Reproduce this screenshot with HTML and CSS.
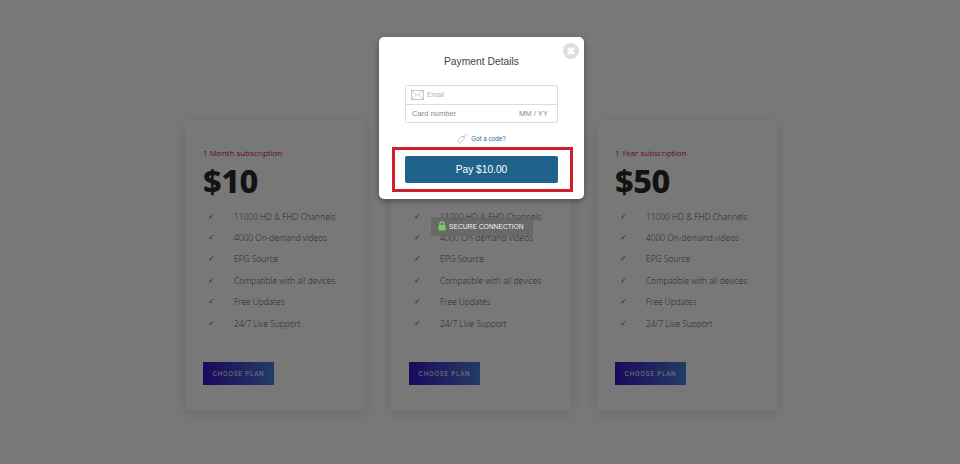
FILE: index.html
```html
<!DOCTYPE html>
<html>
 <head>
  <title>Payment Details</title><meta charset="utf-8">
  <link rel="stylesheet" href="styles.css">
 </head>
 <body>
  <div class="plans">
    <div class="plan">
      <div class="term">1 Month subscription</div>
      <div class="price">$10</div>
      <ul>
        <li>11000 HD &amp; FHD Channels</li>
        <li>4000 On-demand videos</li>
        <li>EPG Source</li>
        <li>Compatible with all devices</li>
        <li>Free Updates</li>
        <li>24/7 Live Support</li>
      </ul>
      <a class="choose" href="#">CHOOSE PLAN</a>
    </div>
    <div class="plan">
      <div class="term"></div>
      <div class="price"></div>
      <ul>
        <li>11000 HD &amp; FHD Channels</li>
        <li>4000 On-demand videos</li>
        <li>EPG Source</li>
        <li>Compatible with all devices</li>
        <li>Free Updates</li>
        <li>24/7 Live Support</li>
      </ul>
      <a class="choose" href="#">CHOOSE PLAN</a>
    </div>
    <div class="plan">
      <div class="term">1 Year subscription</div>
      <div class="price">$50</div>
      <ul>
        <li>11000 HD &amp; FHD Channels</li>
        <li>4000 On-demand videos</li>
        <li>EPG Source</li>
        <li>Compatible with all devices</li>
        <li>Free Updates</li>
        <li>24/7 Live Support</li>
      </ul>
      <a class="choose" href="#">CHOOSE PLAN</a>
    </div>
  </div>

  <div class="overlay"></div>

  <div class="secure">
    <svg class="lock" width="8" height="10" viewBox="0 0 8 10">
      <path d="M2 4.5V2.8a2 2 0 0 1 4 0v1.7" fill="none" stroke="#7fe06a" stroke-width="1.2"/>
      <rect x="0.5" y="4" width="7" height="5.5" rx="0.8" fill="#6fd45a"/>
    </svg>
    <span>SECURE CONNECTION</span>
  </div>

  <div class="modal">
    <a class="close" href="#">
      <svg width="16" height="16" viewBox="0 0 16 16">
        <circle cx="8" cy="8" r="8" fill="#dedede"/>
        <path d="M5 5l6 6M11 5l-6 6" stroke="#fff" stroke-width="2.6"/>
      </svg>
    </a>
    <h2>Payment Details</h2>
    <div class="fields">
      <div class="field">
        <svg class="mail" width="13" height="10" viewBox="0 0 13 10">
          <rect x="0.5" y="0.5" width="12" height="9" fill="none" stroke="#c4c4c4"/>
          <path d="M0.5 0.5l6 5 6-5M0.5 9.5l4.5-5M12.5 9.5l-4.5-5" fill="none" stroke="#c4c4c4" stroke-width="0.8"/>
        </svg>
        <span class="email">Email</span>
      </div>
      <div class="field card">
        <span>Card number</span>
        <span>MM / YY</span>
      </div>
    </div>
    <div class="code">
      <svg width="11" height="11" viewBox="0 0 11 11">
        <path d="M1 7l3.6-3.6h2.6v2.6L3.6 9.6a1 1 0 0 1-1.4 0L1 8.4A1 1 0 0 1 1 7zM6 4.4L10 .8" fill="none" stroke="#bdbdbd" stroke-width="0.9"/>
      </svg>
      <a href="#">Got a code?</a>
    </div>
    <div class="pay-box">
      <button class="pay">Pay $10.00</button>
    </div>
  </div>
 </body>
</html>
```
FILE: styles.css
```css
html, body {
  height: 100%;
}

body {
  margin: 0;
  background: #fff;
  overflow: hidden;
  font-family: "Open Sans", sans-serif;
}

.plans {
  display: flex;
  justify-content: center;
  gap: 26px;
  padding: 121px 0 0 2px;
}

.plan {
  width: 180px;
  height: 289px;
  box-sizing: border-box;
  padding: 26px 18px 0;
  background: #fff;
  box-shadow: 0 3px 14px rgba(0, 0, 0, 0.12);
}

.term {
  height: 11px;
  font-size: 8px;
  line-height: 11px;
  color: #d6154f;
}

.price {
  height: 42px;
  margin: 2px 0 0;
  font-family: "Noto Sans", sans-serif;
  font-size: 32.5px;
  line-height: 42px;
  font-weight: 800;
  letter-spacing: -0.5px;
  color: #2a2a2a;
}

.plan ul {
  list-style: none;
  margin: 3.7px 0 0;
  padding: 0;
}

.plan li {
  position: relative;
  height: 21.4px;
  padding-left: 31px;
  font-size: 8.4px;
  line-height: 21px;
  font-weight: 300;
  white-space: nowrap;
  color: #555;
}

.plan li::before {
  content: "\2713";
  position: absolute;
  left: 5px;
  font-family: "DejaVu Sans", sans-serif;
  font-size: 8px;
  font-weight: 400;
  color: #4a4ad0;
}

.choose {
  display: block;
  width: 71px;
  height: 23px;
  margin-top: 28.3px;
  background: linear-gradient(90deg, #3a13c4, #4a80d8);
  color: #fff;
  font-family: Inter, sans-serif;
  font-size: 6px;
  line-height: 23px;
  letter-spacing: 0.8px;
  text-align: center;
  text-decoration: none;
}

.overlay {
  position: absolute;
  top: 0;
  left: 0;
  right: 0;
  bottom: 0;
  background: rgba(0, 0, 0, 0.53);
}

.secure {
  position: absolute;
  left: 431px;
  top: 217px;
  width: 102px;
  height: 19px;
  display: flex;
  align-items: center;
  gap: 3px;
  padding: 0 0 1px 7px;
  box-sizing: border-box;
  border-radius: 2px;
  background: rgba(100, 100, 100, 0.75);
  color: #f2f2f2;
  font-family: "Liberation Sans", sans-serif;
  font-size: 6.7px;
  line-height: 17px;
}

.modal {
  position: absolute;
  left: 379px;
  top: 37px;
  width: 205px;
  height: 162px;
  box-sizing: border-box;
  padding: 18px 26px 0;
  border-radius: 5px;
  background: #fff;
  box-shadow: 0 2px 6px rgba(0, 0, 0, 0.35);
  font-family: "Liberation Sans", sans-serif;
}

.close {
  position: absolute;
  top: 6px;
  right: 5px;
  line-height: 0;
}

.modal h2 {
  margin: 0;
  font-size: 10.3px;
  line-height: 13px;
  font-weight: normal;
  text-align: center;
  color: #444;
}

.fields {
  margin-top: 17px;
  border: 1px solid #dcdcdc;
  border-radius: 2px;
}

.field {
  height: 17.5px;
  display: flex;
  align-items: center;
  padding: 0 9px 0 5px;
  font-size: 7.6px;
  color: #888;
}

.field.card {
  justify-content: space-between;
  height: 17px;
  border-top: 1px solid #dcdcdc;
  padding-left: 6px;
}

.mail {
  margin-right: 3px;
}

.email {
  font-size: 6.8px;
  color: #b0b0b0;
}

.code {
  display: flex;
  justify-content: center;
  align-items: center;
  gap: 3px;
  margin-top: 10.5px;
  font-size: 6.3px;
}

.code a {
  color: #2c6a98;
  text-decoration: none;
}

.pay-box {
  position: absolute;
  left: 13px;
  top: 110px;
  width: 181px;
  height: 45px;
  box-sizing: border-box;
  padding: 6px 10px;
  border: 3px solid #d0202c;
}

.pay {
  display: block;
  width: 153px;
  height: 27px;
  padding: 0;
  border: 0;
  border-radius: 2px;
  background: #1f628c;
  color: #fff;
  font-family: "Liberation Sans", sans-serif;
  font-size: 10.2px;
}
```
